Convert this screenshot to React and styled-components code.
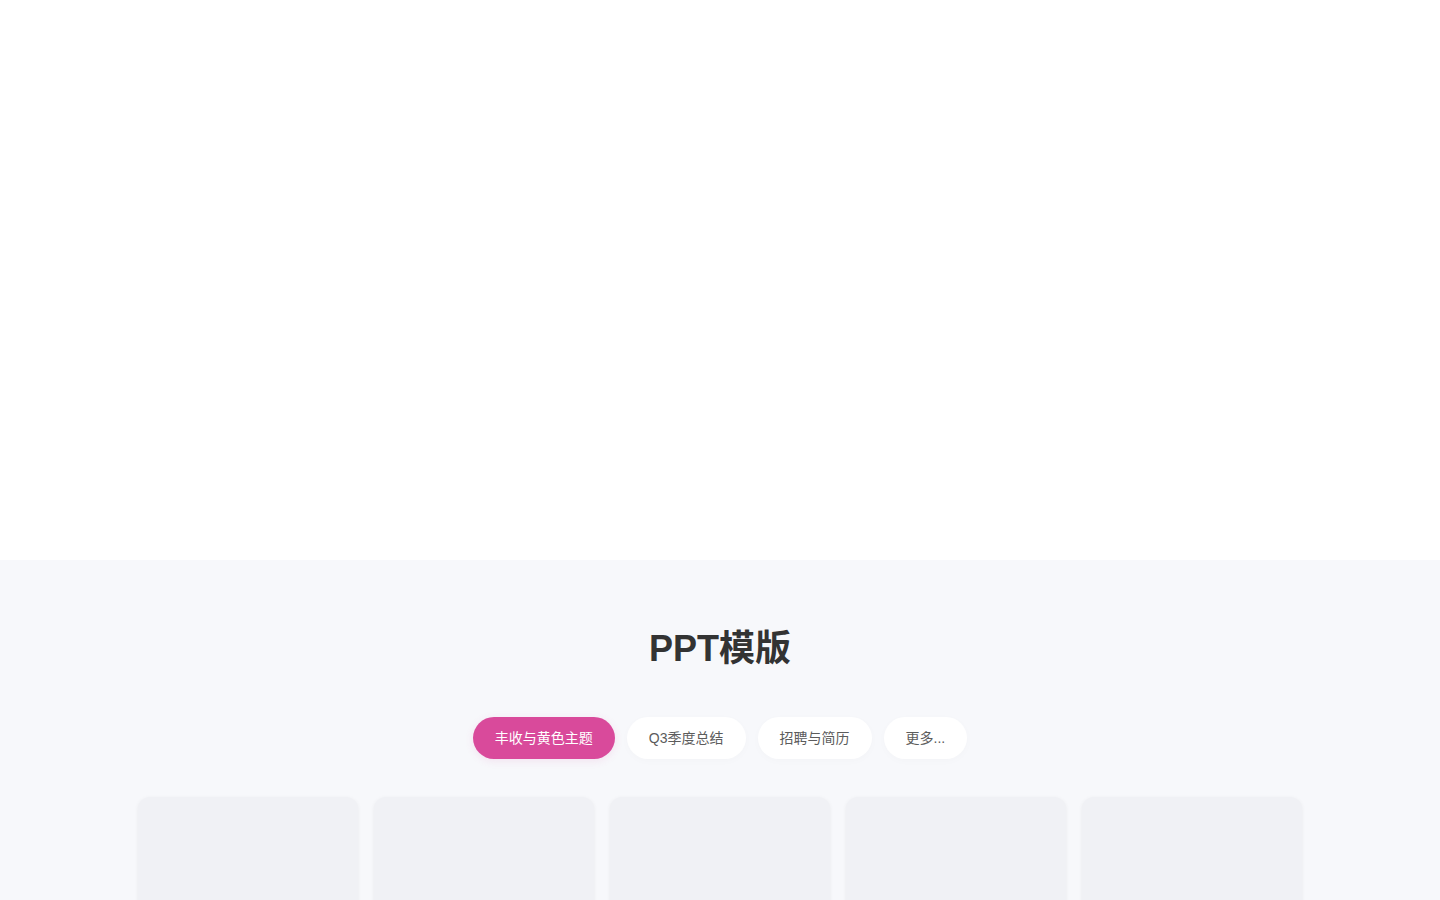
import React, { useState } from "react";
import styled, { createGlobalStyle } from "styled-components";

const GlobalStyle = createGlobalStyle`
  * { box-sizing: border-box; }
  html, body { margin: 0; padding: 0; background: #ffffff; }
  body {
    font-family: "Liberation Sans", Arial, "Noto Sans CJK SC", sans-serif;
    color: #333;
  }
`;

const Hero = styled.section`
  height: 560px;
  background: #ffffff;
`;

const TemplatesSection = styled.section`
  background: #f7f8fb;
  padding: 67px 0 60px;
  min-height: 340px;
`;

const Title = styled.h2`
  margin: 0;
  text-align: center;
  font-size: 36px;
  line-height: 44px;
  font-weight: 700;
  color: #333333;
`;

const Tabs = styled.div`
  display: flex;
  justify-content: center;
  gap: 12px;
  margin-top: 46px;
`;

const Tab = styled.button`
  height: 42px;
  padding: 0 22px 3px;
  border: none;
  border-radius: 21px;
  font-family: inherit;
  font-size: 14px;
  cursor: pointer;
  background: ${(p) => (p.$active ? "#d94a9b" : "#ffffff")};
  color: ${(p) => (p.$active ? "#ffffff" : "#5c5c5c")};
  box-shadow: ${(p) =>
    p.$active ? "0 2px 8px rgba(217, 74, 155, 0.12)" : "0 2px 8px rgba(0, 0, 0, 0.02)"};
`;

const Grid = styled.div`
  width: 1164px;
  margin: 38px auto 0;
  display: grid;
  grid-template-columns: repeat(5, 220px);
  gap: 16px;
`;

const Card = styled.div`
  height: 300px;
  border-radius: 12px;
  background: #f0f1f5;
  box-shadow: 0 1px 4px rgba(0, 0, 0, 0.06);
`;

const tabs = ["丰收与黄色主题", "Q3季度总结", "招聘与简历", "更多..."];

export default function App() {
  const [active, setActive] = useState(0);
  return (
    <>
      <GlobalStyle />
      <Hero />
      <TemplatesSection>
        <Title>PPT模版</Title>
        <Tabs>
          {tabs.map((t, i) => (
            <Tab key={t} $active={i === active} onClick={() => setActive(i)}>
              {t}
            </Tab>
          ))}
        </Tabs>
        <Grid>
          {Array.from({ length: 5 }).map((_, i) => (
            <Card key={i} />
          ))}
        </Grid>
      </TemplatesSection>
    </>
  );
}
